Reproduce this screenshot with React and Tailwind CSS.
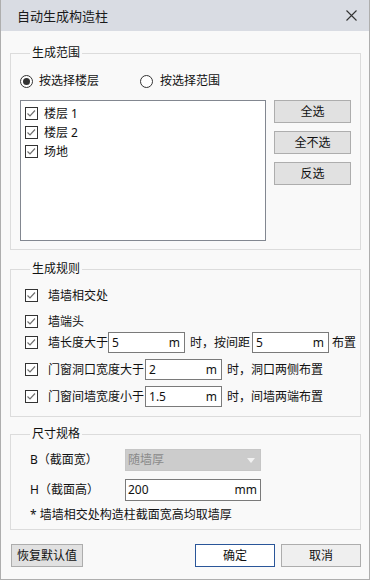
import React from "react";

const Check = () => (
  <div className="w-[13px] h-[13px] border border-[#333333] bg-white flex-none flex items-center justify-center">
    <svg width="11" height="11" viewBox="0 0 11 11">
      <path d="M1.5 5.5 L4 8 L9 2.5" fill="none" stroke="#707070" strokeWidth="1.2" />
    </svg>
  </div>
);

const Radio = ({ on }) => (
  <div className="w-[13px] h-[13px] rounded-full border border-[#333333] bg-white flex-none flex items-center justify-center">
    {on && <div className="w-[7px] h-[7px] rounded-full bg-[#333333]" />}
  </div>
);

const Input = ({ value, unit, w = "w-[77px]" }) => (
  <div className={`${w} h-[21px] border border-[#7a7a7a] bg-white flex items-center justify-between pl-[3px] pr-[4px] flex-none`}>
    <span>{value}</span>
    <span>{unit}</span>
  </div>
);

const SideBtn = ({ children }) => (
  <div className="h-[23px] w-[77px] bg-[#e1e1e1] border border-[#adadad] flex items-center justify-center">
    {children}
  </div>
);

export default function App() {
  return (
    <div className="w-[371px] h-[581px] bg-white font-['Noto_Sans','Noto_Sans_CJK_SC',sans-serif] text-[12px] leading-[16px] text-[#111]">
      <div className="w-[370px] h-[580px] border-x border-b border-[#aeaeae] bg-[#f9f9f9] flex flex-col">
        <div className="h-[31px] bg-[#d9dce3] flex items-center justify-between pl-[16px] pr-[12px] flex-none">
          <span className="text-[13px] leading-[16px] text-[#1a1a1a]">自动生成构造柱</span>
          <svg width="11" height="11" viewBox="0 0 11 11">
            <path d="M0.5 0.5 L10.5 10.5 M10.5 0.5 L0.5 10.5" stroke="#333" strokeWidth="1.1" />
          </svg>
        </div>

        <fieldset className="ml-[9px] mr-[8px] mt-[14px] border border-[#dcdcdc] pl-[9px] pr-[8px] pb-[8px]">
          <legend className="ml-[10px] px-[2px]">生成范围</legend>
          <div className="mt-[12px] h-[16px] flex items-center">
            <Radio on />
            <span className="ml-[6px]">按选择楼层</span>
            <div className="ml-[41px]"><Radio /></div>
            <span className="ml-[7px]">按选择范围</span>
          </div>
          <div className="mt-[11px] flex">
            <div className="w-[246px] h-[141px] border border-[#828790] bg-white pt-[3px] pl-[4px]">
              {["楼层 1", "楼层 2", "场地"].map((t) => (
                <div key={t} className="h-[19px] flex items-center">
                  <Check />
                  <span className="ml-[6px]">{t}</span>
                </div>
              ))}
            </div>
            <div className="ml-[8px] flex flex-col gap-[8px]">
              <SideBtn>全选</SideBtn>
              <SideBtn>全不选</SideBtn>
              <SideBtn>反选</SideBtn>
            </div>
          </div>
        </fieldset>

        <fieldset className="ml-[9px] mr-[8px] mt-[11px] border border-[#dcdcdc] pl-[14px] pb-[9px]">
          <legend className="ml-[5px] px-[2px]">生成规则</legend>
          <div className="mt-[8px] h-[21px] flex items-center">
            <Check />
            <span className="ml-[10px]">墙墙相交处</span>
          </div>
          <div className="mt-[5px] h-[21px] flex items-center">
            <Check />
            <span className="ml-[10px]">墙端头</span>
          </div>
          <div className="mt-[0px] h-[21px] flex items-center">
            <Check />
            <span className="ml-[10px]">墙长度大于</span>
            <Input value="5" unit="m" />
            <span className="ml-[5px]">时，按间距</span>
            <div className="ml-[2px]"><Input value="5" unit="m" /></div>
            <span className="ml-[3px]">布置</span>
          </div>
          <div className="mt-[6px] h-[21px] flex items-center">
            <Check />
            <span className="ml-[10px]">门窗洞口宽度大于</span>
            <div className="ml-[1px]"><Input value="2" unit="m" /></div>
            <span className="ml-[5px]">时，洞口两侧布置</span>
          </div>
          <div className="mt-[6px] h-[21px] flex items-center">
            <Check />
            <span className="ml-[10px]">门窗间墙宽度小于</span>
            <div className="ml-[1px]"><Input value="1.5" unit="m" /></div>
            <span className="ml-[5px]">时，间墙两端布置</span>
          </div>
        </fieldset>

        <fieldset className="ml-[9px] mr-[8px] mt-[9px] border border-[#dcdcdc] pl-[19px] pb-[6px]">
          <legend className="ml-[0px] px-[2px]">尺寸规格</legend>
          <div className="mt-[7px] h-[22px] flex items-center">
            <span className="w-[95px]">B（截面宽）</span>
            <div className="w-[136px] h-[22px] bg-[#cccccc] border border-[#c6c6c6] flex items-center justify-between pl-[2px] pr-[5px]">
              <span className="text-[#8a8a8a]">随墙厚</span>
              <svg width="8" height="5" viewBox="0 0 8 5">
                <path d="M0 0 L8 0 L4 5 Z" fill="#f2f2f2" />
              </svg>
            </div>
          </div>
          <div className="mt-[8px] h-[22px] flex items-center">
            <span className="w-[95px]">H（截面高）</span>
            <div className="w-[136px] h-[22px] border border-[#7a7a7a] bg-white flex items-center justify-between pl-[2px] pr-[3px]">
              <span>200</span>
              <span>mm</span>
            </div>
          </div>
          <div className="mt-[6px] h-[16px] flex items-center">
            <span>* 墙墙相交处构造柱截面宽高均取墙厚</span>
          </div>
        </fieldset>

        <div className="mt-[14px] ml-[10px] mr-[8px] flex items-center">
          <div className="w-[72px] h-[23px] bg-[#e1e1e1] border border-[#adadad] flex items-center justify-center">恢复默认值</div>
          <div className="ml-auto w-[80px] h-[23px] bg-white border border-[#2a5699] flex items-center justify-center">确定</div>
          <div className="ml-[6px] w-[80px] h-[23px] bg-[#efefef] border border-[#adadad] flex items-center justify-center">取消</div>
        </div>
      </div>
    </div>
  );
}
